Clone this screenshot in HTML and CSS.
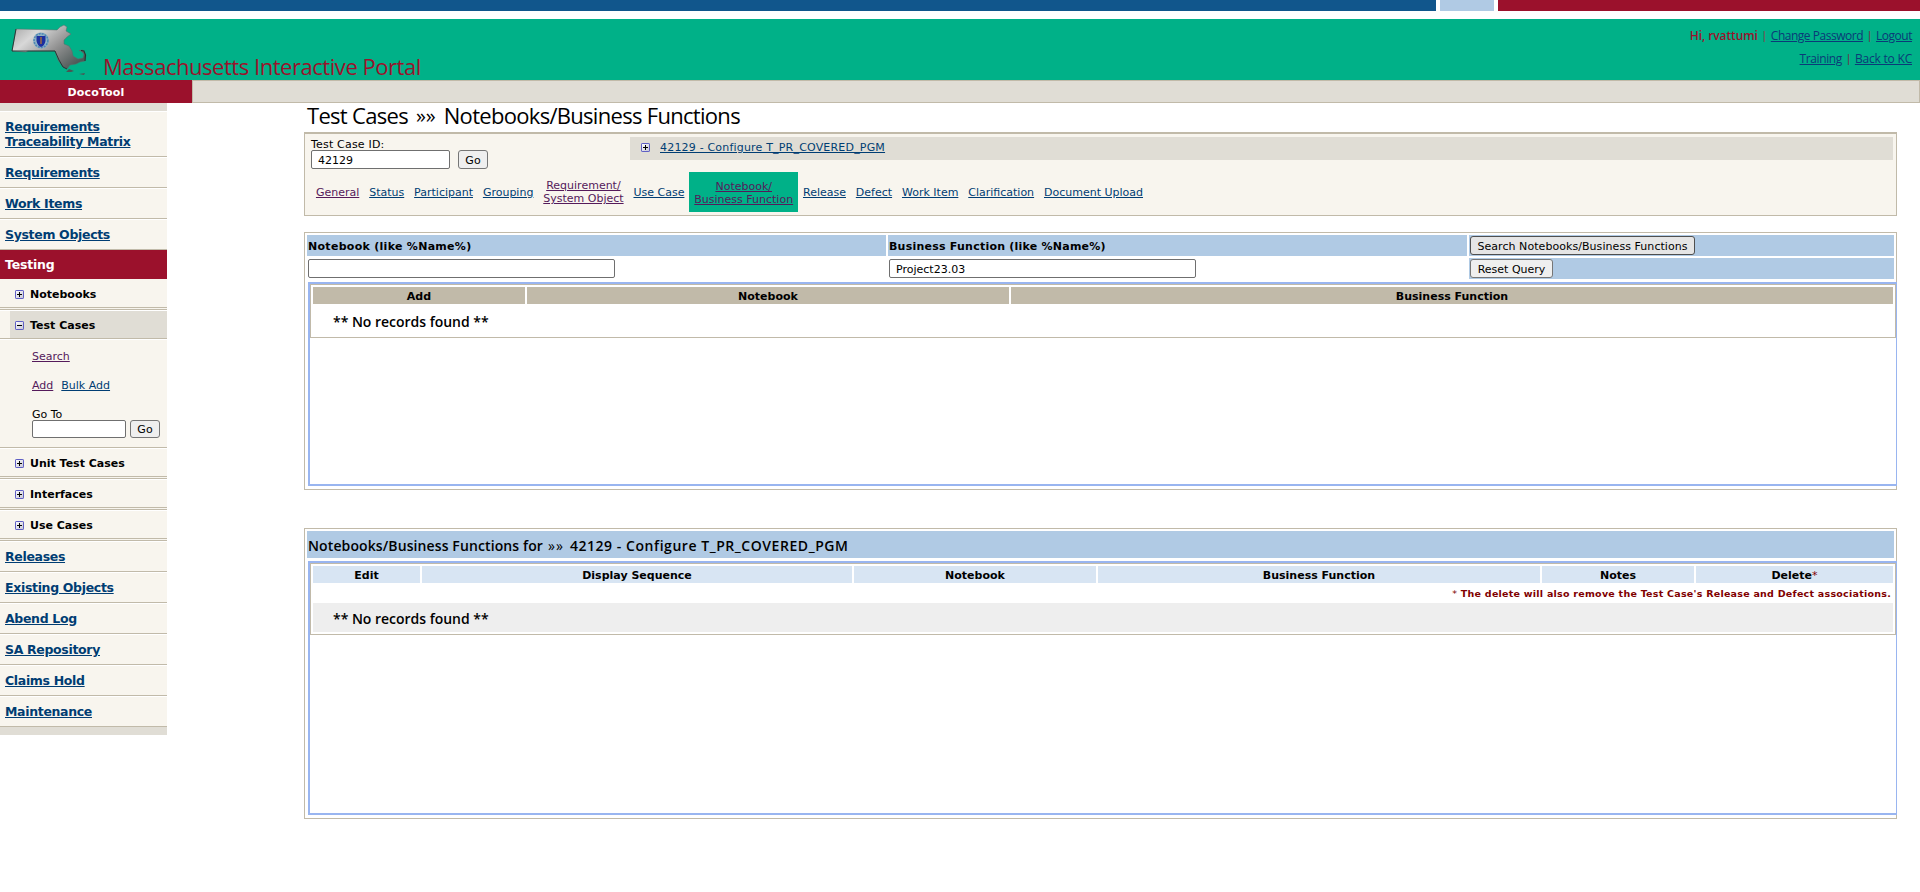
FILE: index.html
```html
<!DOCTYPE html>
<html lang="en">
<head>
<meta charset="utf-8">
<title>Massachusetts Interactive Portal</title>
<link rel="stylesheet" href="styles.css">
</head>
<body>
<svg class="defs" width="0" height="0" aria-hidden="true">
  <defs>
    <linearGradient id="btn" x1="0" y1="0" x2="1" y2="1"><stop offset="0" stop-color="#fff"/><stop offset="1" stop-color="#c4c4d4"/></linearGradient>
    <symbol id="plus" viewBox="0 0 9 9"><rect x=".5" y=".5" width="8" height="8" rx=".6" fill="url(#btn)" stroke="#5f5fc4"/><path d="M2 4.5h5M4.5 2v5" stroke="#000"/></symbol>
    <symbol id="minus" viewBox="0 0 9 9"><rect x=".5" y=".5" width="8" height="8" rx=".6" fill="url(#btn)" stroke="#5f5fc4"/><path d="M2 4.5h5" stroke="#000"/></symbol>
  </defs>
</svg>
<div class="stripes"><i class="blue"></i><i class="light"></i><i class="red"></i></div>
<header class="banner">
  <svg class="logo" width="84" height="56" viewBox="6 22 84 56">
    <defs><linearGradient id="metal" x1="0" y1="0" x2="1" y2=".7"><stop offset="0" stop-color="#a2a2a2"/><stop offset=".3" stop-color="#d8d8d8"/><stop offset=".65" stop-color="#909090"/><stop offset="1" stop-color="#4d5857"/></linearGradient></defs>
    <path d="M16 29L57 30L60 27L64 25L67 27L66 31L71 34L67 37L64 40L64 44L69 46L72 51L73 56L78 59L83 58L84 54L81 51L79 50.500L83 50L86 55L85 61L80 62L76 64L70 65L67 69L63 67L58 60L55 51L28 51L26 52L12 51Z" fill="url(#metal)" stroke="#5a6b68" stroke-width=".5"/>
    <path d="M16 29L12 51H55L59 60L63 67L67 69" fill="none" stroke="#1f302e" stroke-width=".9"/>
    <path d="M81 50.500L84 51L85.500 55L85 61" fill="none" stroke="#26312f" stroke-width="1.100"/>
    <path d="M66 72l3-3 5 2-3 1zM79 74l6-1-1 2z" fill="#4a5553"/>
    <circle cx="41" cy="40.500" r="8" fill="#8fb2c4"/><circle cx="41" cy="40.500" r="6.900" fill="none" stroke="#4e86b4" stroke-width="1.500" stroke-dasharray="2 1"/>
    <path d="M36.500 36h9v5q-1 5-4.500 6q-3.500-1-4.500-6z" fill="#1c2fa0"/><path d="M41 37v7" stroke="#7d5a5a" stroke-width="2"/>
  </svg>
  <h1 class="brand">Massachusetts Interactive Portal</h1>
  <div class="account">
    <div><b class="hi">Hi, rvattumi</b><s>|</s><a class="cp">Change Password</a><s>|</s><a class="lo">Logout</a></div>
    <div><a class="tr">Training</a><s>|</s><a class="kc">Back to KC</a></div>
  </div>
</header>
<div class="navbar"><div class="app">DocoTool</div><div class="rest"></div></div>
<div class="page">
  <nav class="side">
    <div class="cap"></div>
    <div class="item"><a>Requirements<br>Traceability Matrix</a></div>
    <div class="item"><a>Requirements</a></div>
    <div class="item"><a>Work Items</a></div>
    <div class="item"><a>System Objects</a></div>
    <div class="active">Testing</div>
    <div class="sub first"><svg class="ic"><use href="#plus"/></svg>Notebooks</div>
    <div class="sub open"><div class="shade"><svg class="ic"><use href="#minus"/></svg>Test Cases</div></div>
    <div class="tools">
      <div class="row"><a class="v">Search</a></div>
      <div class="row"><a class="v">Add</a><a>Bulk Add</a></div>
      <label>Go To</label>
      <div class="go"><span class="field"></span><span class="button">Go</span></div>
    </div>
    <div class="sub"><svg class="ic"><use href="#plus"/></svg>Unit Test Cases</div>
    <div class="sub"><svg class="ic"><use href="#plus"/></svg>Interfaces</div>
    <div class="sub"><svg class="ic"><use href="#plus"/></svg>Use Cases</div>
    <div class="item"><a>Releases</a></div>
    <div class="item"><a>Existing Objects</a></div>
    <div class="item"><a>Abend Log</a></div>
    <div class="item"><a>SA Repository</a></div>
    <div class="item"><a>Claims Hold</a></div>
    <div class="item"><a>Maintenance</a></div>
    <div class="cap"></div>
  </nav>
  <main>
    <h2 class="title"><span>Test Cases</span><small>»»</small><span>Notebooks/Business Functions</span></h2>
    <section class="case">
      <div class="top">
        <div class="finder"><label>Test Case ID:</label><div class="go"><span class="field">42129</span><span class="button">Go</span></div></div>
        <div class="crumb"><svg class="ic"><use href="#plus"/></svg><a>42129 - Configure T_PR_COVERED_PGM</a></div>
      </div>
      <div class="tabs">
        <a class="v">General</a><a>Status</a><a>Participant</a><a>Grouping</a><a class="v">Requirement/<br>System Object</a><a>Use Case</a><a class="v current">Notebook/<br>Business Function</a><a>Release</a><a>Defect</a><a>Work Item</a><a>Clarification</a><a>Document Upload</a>
      </div>
    </section>
    <section class="panel search">
      <div class="query">
        <div class="blue-cell">Notebook (like %Name%)</div><div class="blue-cell">Business Function (like %Name%)</div><div class="blue-cell"><span class="button hot">Search Notebooks/Business Functions</span></div>
        <div class="cell"><span class="field"></span></div><div class="cell"><span class="field">Project23.03</span></div><div class="blue-cell"><span class="button">Reset Query</span></div>
      </div>
      <div class="frame"><div class="table">
        <div class="head find"><div>Add</div><div>Notebook</div><div>Business Function</div></div>
        <div class="none">** No records found **</div>
      </div></div>
    </section>
    <section class="panel list">
      <div class="bar"><span class="w1">Notebooks/Business Functions for</span><small>»»</small><span class="w2">42129 - Configure T_PR_COVERED_PGM</span></div>
      <div class="frame"><div class="table">
        <div class="head results"><div>Edit</div><div>Display Sequence</div><div>Notebook</div><div>Business Function</div><div>Notes</div><div>Delete<em>*</em></div></div>
        <div class="note"><em>*</em> The delete will also remove the Test Case's Release and Defect associations.</div>
        <div class="none gray">** No records found **</div>
      </div></div>
    </section>
  </main>
</div>
</body>
</html>
```
FILE: styles.css
```css
* { box-sizing: border-box; }
body { margin: 0; background: #fff; color: #000; font: 11px/13px "DejaVu Sans", sans-serif; }
.defs { position: absolute; }
a { color: #003d73; text-decoration: underline; text-underline-offset: 1px; }
a.v { color: #551a5b; }
.ic { width: 9px; height: 9px; flex: none; }

.stripes { display: flex; gap: 4px; height: 11px; margin-bottom: 8px; }
.stripes i { display: block; }
.blue { width: 1436px; background: #11568c; }
.light { width: 54px; background: #b0cae4; }
.red { flex: 1; background: #9b112c; }

.banner { display: flex; height: 61px; background: #00b188; padding: 3px 8px 0 6px; }
.logo { flex: none; }
.brand { margin: 30px 0 0 13px; font: 22px/28px "Open Sans", sans-serif; letter-spacing: -.46px; color: #9b112c; white-space: nowrap; }
.account { margin-left: auto; padding-top: 2px; font: 12px/23px "Open Sans", sans-serif; color: #9b112c; text-align: right; }
.account div { display: flex; justify-content: flex-end; }
.account s { width: 13px; text-align: center; text-decoration: none; font-size: 10px; }
.account a { color: #0b3a78; letter-spacing: -.48px; }
.account a.tr { letter-spacing: -.4px; }
.account a.kc { letter-spacing: -.2px; }
.hi { font-weight: 600; letter-spacing: -.1px; }

.navbar { display: flex; height: 23px; }
.app { width: 192px; background: #9b112c; color: #fff; text-align: center; font-weight: bold; line-height: 25px; letter-spacing: .15px; }
.rest { flex: 1; background: #e0ddd5; border: 1px solid #c1baa9; }

.page { display: flex; }
.side { width: 167px; margin-right: 137px; flex: none; }
.cap { height: 8px; background: #e0ddd5; }
.item { border-top: 1px solid #fff; border-bottom: 1px solid #c1baa9; background: #f8f5ee; padding: 7px 5px; font: bold 12.5px/15px "DejaVu Sans", sans-serif; letter-spacing: -.33px; white-space: nowrap; }
.active { height: 29px; padding-left: 5px; background: #9b112c; color: #fff; font: bold 12.5px/29px "DejaVu Sans", sans-serif; letter-spacing: -.2px; }
.sub { display: flex; align-items: center; gap: 6px; height: 31px; padding: 1px 0 0 15px; border-top: 1px solid #fff; border-bottom: 3px double #c1baa9; background: #f8f5ee; font-weight: bold; letter-spacing: 0; }
.sub.first { border-top: 0; padding-top: 2px; }
.sub.open { height: 29px; border-bottom: 1px solid #c1baa9; padding: 0 0 0 10px; }
.shade { flex: 1; align-self: stretch; display: flex; align-items: center; gap: 6px; padding: 1px 0 0 5px; background: #e0ddd5; }
.tools { height: 109px; border-top: 1px solid #fff; border-bottom: 1px solid #c1baa9; background: #f8f5ee; padding: 10px 0 0 32px; }
.tools .row { display: flex; gap: 8px; height: 29px; }
.tools label { display: block; height: 12px; }
.go { display: flex; }
.field { display: block; width: 94px; height: 18px; border: 1px solid #6f6f6f; border-radius: 2px; background: #fff; padding-left: 6px; line-height: 18px; }
.button { display: block; height: 18px; border: 1px solid #767676; border-radius: 3px; background: #efefef; padding: 0 6px; line-height: 17px; white-space: nowrap; text-align: center; }
.go .button { width: 30px; margin-left: 4px; padding: 0; }

main { width: 1593px; }
.title { display: flex; height: 29px; margin: 0; padding-left: 3px; font: 22px/25px "Open Sans", sans-serif; white-space: nowrap; letter-spacing: -.7px; }
.title small { font-size: 20px; margin: 0 8px 0 8px; letter-spacing: 0; }

.case { height: 84px; border: 1px solid #c1baa9; border-top-width: 2px; background: #f8f5ee; padding: 3px 3px 0 3px; }
.top { display: flex; align-items: flex-start; }
.finder { width: 322px; padding: 1px 0 0 3px; }
.finder label { display: block; height: 12px; letter-spacing: .19px; }
.finder .field { width: 139px; height: 19px; line-height: 19px; }
.finder .button { margin-left: 8px; height: 19px; line-height: 19px; }
.crumb { flex: 1; display: flex; align-items: center; gap: 10px; height: 23px; padding: 0 0 2px 11px; background: #e0ddd5; letter-spacing: .19px; }
.tabs { display: flex; align-items: center; height: 40px; padding-left: 3px; margin-top: 3px; text-align: center; white-space: nowrap; letter-spacing: 0; }
.tabs a { padding: 0 4.95px; }
.tabs .current { height: 40px; padding-top: 8px; background: #00b188; }

.panel { border: 1px solid #c1baa9; padding: 2px; }
.search { margin-top: 16px; height: 258px; }
.list { margin-top: 38px; height: 291px; }
.query { display: grid; grid-template-columns: 579px 579px 425px; grid-auto-rows: 21px; gap: 2px; margin-bottom: 3px; }
.blue-cell { background: #b0cae4; font-weight: bold; line-height: 23px; padding-left: 1px; letter-spacing: .29px; }
.blue-cell:nth-child(2) { letter-spacing: .23px; }
.cell { padding: 1px 0 0 1px; }
.query .field { width: 307px; height: 19px; line-height: 19px; }
.query .button { width: 83px; height: 19px; margin-top: 1px; font-weight: normal; line-height: 19px; padding: 0; letter-spacing: 0; }
.query .button.hot { width: 225px; background: #e5e5e5; border-color: #4f4f4f; letter-spacing: .06px; }
.frame { margin: 0 -3px 0 1px; height: 204px; border: 2px solid #99b5f0; border-right-width: 1px; }
.list .frame { height: 254px; }
.table { border: 1px solid #c1baa9; padding: 2px; display: grid; gap: 2px; }
.head { display: grid; gap: 2px; grid-auto-rows: 17px; font-weight: bold; line-height: 19px; text-align: center; }
.find { grid-template-columns: 212px 482px 1fr; }
.find div { background: #c1baa9; }
.results { grid-template-columns: 107px 430px 242px 442px 152px 1fr; }
.results div { background: #d8e5f3; }
.none { height: 29px; padding: 2px 0 0 20px; font: 600 14px/28px "Open Sans", sans-serif; letter-spacing: -.02px; }
.gray { background: #eee; }
.note { height: 16px; padding-right: 2px; text-align: right; color: #800000; font: bold 9.5px/17px "DejaVu Sans", sans-serif; letter-spacing: .25px; }
em { font-style: normal; font-weight: normal; color: #800000; }
.bar { display: flex; height: 27px; margin-bottom: 3px; padding-left: 1px; background: #b0cae4; font: 600 14px/29px "Open Sans", sans-serif; white-space: nowrap; }
.bar small { font-size: 14px; font-weight: normal; margin: 0 6px 0 5px; letter-spacing: 1px; }
.w1 { letter-spacing: .11px; }
.w2 { letter-spacing: .55px; }
```
